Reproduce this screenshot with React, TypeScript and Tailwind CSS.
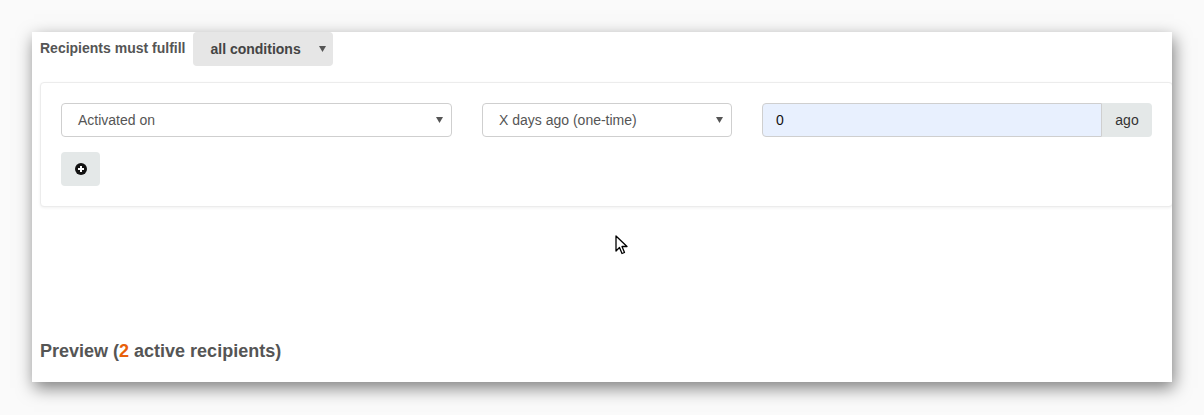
import React from "react";

function Caret() {
  return (
    <svg width="7" height="6" viewBox="0 0 7 6" className="shrink-0">
      <path d="M0 0h7L3.5 6z" fill="#555" />
    </svg>
  );
}

function PlusCircle() {
  return (
    <svg width="12" height="12" viewBox="0 0 12 12">
      <circle cx="6" cy="6" r="6" fill="#111" />
      <path d="M6 3v6M3 6h6" stroke="#fff" strokeWidth="2" />
    </svg>
  );
}

function Cursor() {
  return (
    <svg width="14" height="21" viewBox="0 0 14 21" className="absolute left-[615px] top-[235px]">
      <path
        d="M1 1v15l3.5-3.5 2.5 6 2.5-1-2.5-6H12z"
        fill="#fff"
        stroke="#000"
        strokeWidth="1.3"
        strokeLinejoin="round"
      />
    </svg>
  );
}

function FakeSelect({ label, width }: { label: string; width: string }) {
  return (
    <div
      className={`flex h-[34px] ${width} items-center justify-between rounded-[4px] border border-[#cfcfcf] bg-white pl-[16px] pr-[8px] text-[14px] text-[#555]`}
    >
      <span>{label}</span>
      <Caret />
    </div>
  );
}

export default function App() {
  return (
    <div
      className="relative h-[415px] w-[1204px] bg-[#fafafa] pl-[32px] pt-[32px]"
      style={{ fontFamily: '"Liberation Sans", Arial, sans-serif' }}
    >
      <div className="flex h-[350px] w-[1140px] flex-col overflow-hidden bg-white pl-[8px] shadow-[2px_6px_16px_rgba(0,0,0,0.5)]">
        <div className="flex h-[34px] items-center gap-[8px]">
          <span className="-mt-[1px] text-[14px] font-bold text-[#555]">
            Recipients must fulfill
          </span>
          <div className="flex h-[34px] w-[140px] items-center justify-between rounded-[4px] bg-[#e6e6e6] pl-[17px] pr-[7px] text-[14px] font-bold text-[#444]">
            <span>all conditions</span>
            <Caret />
          </div>
        </div>

        <div className="mt-[16px] w-[1133px] rounded-[4px] border border-[#ececec] bg-white px-[20px] py-[20px] shadow-[0_1px_3px_rgba(0,0,0,0.06)]">
          <div className="flex gap-[30px]">
            <FakeSelect label="Activated on" width="w-[391px]" />
            <FakeSelect label="X days ago (one-time)" width="w-[250px]" />
            <div className="flex h-[34px] w-[390px]">
              <div className="flex flex-1 items-center rounded-l-[4px] border border-[#cfcfcf] bg-[#e8f0fe] pl-[13px] text-[14px] text-[#111]">
                0
              </div>
              <div className="flex w-[50px] items-center justify-center rounded-r-[4px] bg-[#e4e8e8] text-[14px] text-[#333]">
                ago
              </div>
            </div>
          </div>
          <button className="mt-[15px] flex h-[34px] w-[39px] items-center justify-center rounded-[4px] bg-[#e4e8e8]">
            <PlusCircle />
          </button>
        </div>

        <div className="mt-[131px] text-[18px] font-bold text-[#555]">
          Preview (<span className="text-[#e8600a]">2</span> active recipients)
        </div>
      </div>
      <Cursor />
    </div>
  );
}
